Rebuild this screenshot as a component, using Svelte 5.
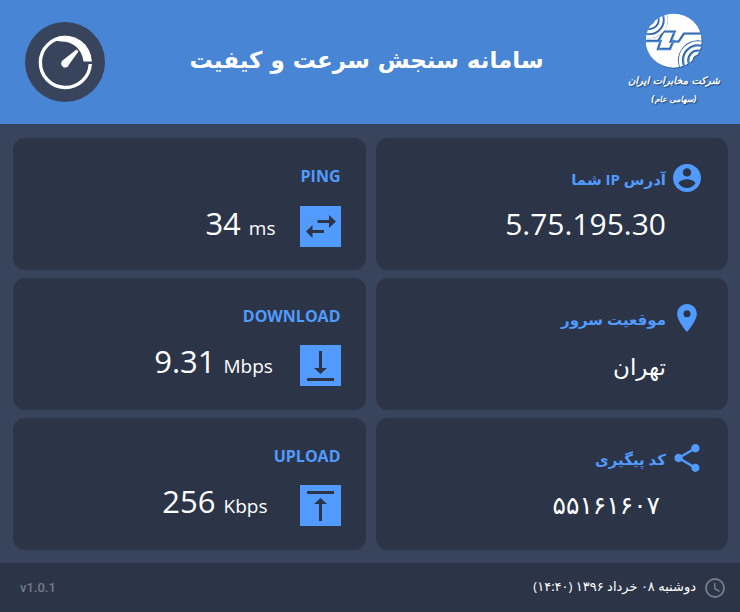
<script>
  const info = [
    { id: 'ip', label: 'آدرس IP شما', value: '5.75.195.30', icon: 'account' },
    { id: 'server', label: 'موقعیت سرور', value: 'تهران', icon: 'place' },
    { id: 'code', label: 'کد پیگیری', value: '۵۵۱۶۱۶۰۷', icon: 'share' }
  ];
  const results = [
    { id: 'ping', label: 'PING', value: '34', unit: 'ms' },
    { id: 'download', label: 'DOWNLOAD', value: '9.31', unit: 'Mbps' },
    { id: 'upload', label: 'UPLOAD', value: '256', unit: 'Kbps' }
  ];
  const icons = {
    account: 'M12 2C6.48 2 2 6.48 2 12s4.48 10 10 10 10-4.48 10-10S17.52 2 12 2zm0 3c1.66 0 3 1.34 3 3s-1.34 3-3 3-3-1.34-3-3 1.34-3 3-3zm0 14.2c-2.5 0-4.71-1.28-6-3.22.03-1.99 4-3.08 6-3.08 1.99 0 5.97 1.09 6 3.08-1.29 1.94-3.5 3.22-6 3.22z',
    place: 'M12 2C8.13 2 5 5.13 5 9c0 5.25 7 13 7 13s7-7.75 7-13c0-3.87-3.13-7-7-7zm0 9.5a2.5 2.5 0 0 1 0-5 2.5 2.5 0 0 1 0 5z',
    share: 'M18 16.08c-.76 0-1.44.3-1.96.77L8.91 12.7c.05-.23.09-.46.09-.7s-.04-.47-.09-.7l7.05-4.11c.54.5 1.25.81 2.04.81 1.66 0 3-1.34 3-3s-1.34-3-3-3-3 1.34-3 3c0 .24.04.47.09.7L8.04 9.81C7.5 9.31 6.79 9 6 9c-1.66 0-3 1.34-3 3s1.34 3 3 3c.79 0 1.5-.31 2.04-.81l7.12 4.16c-.05.21-.08.43-.08.65 0 1.61 1.31 2.92 2.92 2.92s2.92-1.31 2.92-2.92-1.31-2.92-2.92-2.92z'
  };
  const arrows = {
    ping: 'M17.500 14H29V9L36 15.500L29 22V17H17.500ZM24 24H12.500V19L6 25.500L12.500 32V27H24Z',
    download: 'M19 6H22V23H27L20.500 29L14 23H19ZM7 33H34V36H7Z',
    upload: 'M7 6H34V9H7ZM20.500 13L27 19H22V36H19V19H14Z'
  };
</script>

<div class="app" dir="rtl" lang="fa">
  <header>
    <div class="brand">
      <svg class="mark" viewBox="18 14 172 168" aria-hidden="true">
        <defs>
          <clipPath id="disc"><ellipse cx="103" cy="97" rx="84" ry="81" /></clipPath>
          <mask id="cuts" maskUnits="userSpaceOnUse" x="18" y="14" width="172" height="168">
            <path d="M18 14H190V182H18Z" fill="#fff" />
            <path d="M58 96L72 70H106L94 100H118L134 76H190" fill="none" stroke="#000" stroke-width="7" />
            <path d="M18 98H64L56 122H92L104 94" fill="none" stroke="#000" stroke-width="7" />
            <circle cx="30" cy="34" r="56" fill="#000" />
            <circle cx="176" cy="156" r="60" fill="#000" />
            <g fill="none" stroke="#fff" stroke-width="9">
              <circle cx="30" cy="34" r="21" />
              <circle cx="30" cy="34" r="36" />
              <circle cx="30" cy="34" r="51" />
              <circle cx="176" cy="156" r="21" />
              <circle cx="176" cy="156" r="37" />
              <circle cx="176" cy="156" r="53" />
            </g>
          </mask>
        </defs>
        <g class="emblem">
          <g clip-path="url(#disc)">
            <path d="M18 14H190V182H18Z" fill="#fff" mask="url(#cuts)" />
          </g>
        </g>
      </svg>
      <span class="company">شرکت مخابرات ایران</span>
      <span class="kind">(سهامی عام)</span>
    </div>
    <h1>سامانه سنجش سرعت و کیفیت</h1>
    <svg class="gauge" viewBox="0 0 80 80" aria-hidden="true">
      <circle cx="40" cy="40" r="40" fill="#38445b" />
      <path d="M65.300 42A25 25 0 1 1 40 15.500" fill="none" stroke="#fff" stroke-width="3.400" />
      <path d="M32 15.200A26.500 26.500 0 0 1 66.900 39.500H58.500C57 27 48 19.500 36 19.500L30 18.500Z" fill="#fff" />
      <path d="M53.500 29.500L44 42.500A4 4 0 1 1 37.500 38.500L51.500 27.500Z" fill="#fff" />
    </svg>
  </header>

  <main>
    <div class="column">
      {#each info as item (item.id)}
        <section class="card info {item.id}">
          <svg class="glyph" viewBox="2 2 20 20" aria-hidden="true"><path d={icons[item.icon]} fill="#519bff" /></svg>
          <h2>{item.label}</h2>
          <p>{item.value}</p>
        </section>
      {/each}
    </div>
    <div class="column" dir="ltr" lang="en">
      {#each results as item (item.id)}
        <section class="card result {item.id}">
          <h2>{item.label}</h2>
          <div class="reading">
            <p><span class="number">{item.value}</span><span class="unit">{item.unit}</span></p>
            <svg class="tile" viewBox="0 0 41 41" aria-hidden="true">
              <path d="M0 0H41V41H0Z" fill="#519bff" />
              <path d={arrows[item.id]} fill="#2c3448" />
            </svg>
          </div>
        </section>
      {/each}
    </div>
  </main>

  <footer>
    <div class="date">
      <svg viewBox="2 2 20 20" aria-hidden="true">
        <circle cx="12" cy="12" r="9" fill="none" stroke="#737c88" stroke-width="1.900" />
        <path d="M11.700 7V12.500L16.500 15.500" fill="none" stroke="#737c88" stroke-width="1.500" />
      </svg>
      <time datetime="2017-05-29T14:40">دوشنبه ۰۸ خرداد ۱۳۹۶ (۱۴:۴۰)</time>
    </div>
    <span class="version" dir="ltr">v1.0.1</span>
  </footer>
</div>

<style>
  :global(body) {
    margin: 0;
    background: #38445b;
  }
  .app {
    display: flex;
    flex-direction: column;
    min-height: 100vh;
    color: #fff;
    font-family: 'Open Sans', 'DejaVu Sans', sans-serif;
  }
  h1, h2, p {
    margin: 0;
  }
  header {
    display: flex;
    align-items: center;
    justify-content: space-between;
    box-sizing: border-box;
    height: 124px;
    padding: 0 20px 4px 25px;
    background: #4885d5;
  }
  .brand {
    display: flex;
    flex-direction: column;
    align-items: center;
    width: 92px;
    white-space: nowrap;
    font-family: 'DejaVu Sans', sans-serif;
    font-style: italic;
    text-shadow: 1px 1px 1px #234773;
  }
  .mark {
    width: 58px;
    height: 56px;
  }
  .emblem {
    filter: drop-shadow(3px 3px 1px #315f9b);
  }
  .company {
    font-size: 10px;
    font-weight: 700;
    line-height: 24px;
  }
  .kind {
    font-size: 8px;
    font-weight: 700;
    line-height: 14px;
  }
  h1 {
    font-family: 'DejaVu Sans', sans-serif;
    font-size: 23px;
    font-weight: 700;
    line-height: 36px;
  }
  .gauge {
    width: 80px;
    height: 80px;
    padding-top: 4px;
  }
  main {
    display: flex;
    flex: 1;
    gap: 10px;
    padding: 14px 12px 13px 13px;
  }
  .column {
    display: flex;
    flex: 1;
    flex-direction: column;
    gap: 8px;
    min-width: 0;
  }
  .card {
    flex: 1;
    box-sizing: border-box;
    min-height: 132px;
    border-radius: 12px;
    background: #2c3448;
  }
  .card h2 {
    color: #519bff;
    font-size: 16px;
    font-weight: 700;
    line-height: 28px;
  }
  .info {
    display: grid;
    grid-template-columns: 28px 1fr;
    grid-template-rows: 28px 40px;
    column-gap: 7px;
    row-gap: 12px;
    padding: 26px 27px 0 20px;
  }
  .card.info h2 {
    font-size: 15px;
    line-height: 30px;
  }
  .glyph {
    width: 28px;
    height: 28px;
  }
  .info p {
    grid-column: 2;
    font-size: 30px;
    line-height: 40px;
  }
  .info.server p {
    font-size: 23px;
    line-height: 44px;
  }
  .info.code p {
    padding-right: 6px;
    font-size: 25px;
  }
  .result {
    padding: 24px 25px 0 20px;
    text-align: right;
  }
  .reading {
    display: flex;
    align-items: center;
    justify-content: flex-end;
    gap: 24px;
    margin-top: 12px;
  }
  .reading p {
    display: flex;
    align-items: baseline;
    gap: 8px;
    line-height: 38px;
    padding-bottom: 4px;
  }
  .ping .reading {
    margin-top: 14px;
  }
  .ping .reading p {
    padding-bottom: 2px;
  }
  .number {
    font-size: 31px;
  }
  .unit {
    font-size: 19px;
    text-align: left;
  }
  .download .unit, .upload .unit {
    min-width: 52px;
  }
  .tile {
    width: 41px;
    height: 41px;
  }
  footer {
    display: flex;
    align-items: center;
    justify-content: space-between;
    box-sizing: border-box;
    height: 49px;
    padding: 0 15px 0 20px;
    background: #2c3448;
  }
  .date {
    display: flex;
    align-items: center;
    gap: 9px;
    font-size: 13px;
  }
  .date time {
    padding-bottom: 3px;
  }
  .date svg {
    width: 20px;
    height: 20px;
  }
  .version {
    color: #737c88;
    font-family: Roboto, sans-serif;
    font-size: 13px;
    font-weight: 500;
  }
</style>
